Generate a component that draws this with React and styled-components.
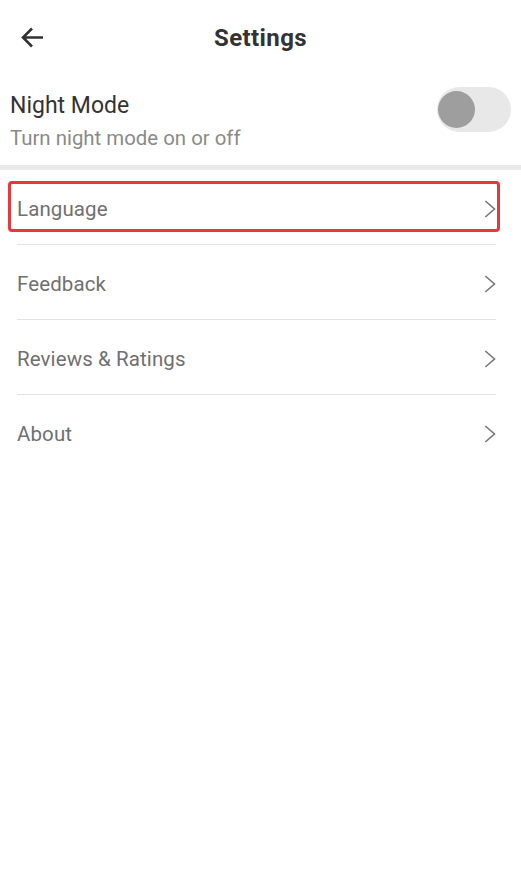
import React from "react";
import styled, { createGlobalStyle } from "styled-components";

const Global = createGlobalStyle`
  html, body { margin: 0; padding: 0; background: #fff; }
  body { font-family: Roboto, "Noto Sans", Arial, sans-serif; -webkit-font-smoothing: antialiased; }
  * { box-sizing: border-box; }
`;

const Page = styled.div`
  width: 521px;
  min-height: 896px;
  background: #fff;
`;

const Header = styled.header`
  height: 73px;
  display: grid;
  grid-template-columns: 1fr auto 1fr;
  align-items: center;
  padding: 0 20px;
`;

const BackButton = styled.button`
  justify-self: start;
  width: 24px;
  height: 24px;
  padding: 0;
  border: 0;
  background: none;
  display: flex;
  color: #333;
`;

const Title = styled.h1`
  margin: 0;
  padding-top: 4px;
  font-size: 24px;
  letter-spacing: 0.4px;
  font-weight: 700;
  color: #333;
  line-height: 69px;
`;

const NightSection = styled.section`
  height: 92px;
  padding: 14px 10px 0;
  display: flex;
  justify-content: space-between;
  align-items: flex-start;
`;

const NightText = styled.div`
  padding-top: 4px;
  display: flex;
  flex-direction: column;
`;

const NightTitle = styled.div`
  font-size: 23px;
  line-height: 30px;
  color: #333;
`;

const NightSub = styled.div`
  margin-top: 2px;
  font-size: 20.4px;
  line-height: 30px;
  color: #8a8a8a;
`;

const Track = styled.div`
  width: 74px;
  height: 45px;
  border-radius: 23px;
  background: #e8e8e8;
  display: flex;
  align-items: center;
  padding-left: 1px;
`;

const Knob = styled.div`
  width: 37px;
  height: 37px;
  border-radius: 50%;
  background: #9e9e9e;
`;

const Band = styled.div`
  height: 5px;
  background: #e9e9e9;
`;

const List = styled.ul`
  list-style: none;
  margin: 0 25px 0 17px;
  padding: 0;
`;

const Row = styled.li`
  position: relative;
  height: 75px;
  padding-top: 3px;
  display: flex;
  align-items: center;
  justify-content: space-between;
  border-bottom: ${(p) => (p.$last ? "none" : "1px solid #e3e3e3")};
`;

const RowLabel = styled.span`
  font-size: 20.5px;
  letter-spacing: 0.1px;
  color: #707070;
`;

const Highlight = styled.div`
  position: absolute;
  left: -9px;
  right: -4px;
  top: 11px;
  bottom: 12px;
  border: 3px solid #e8383d;
  border-radius: 4px;
  pointer-events: none;
`;

const Chevron = () => (
  <svg width="12" height="18" viewBox="0 0 12 18" fill="none">
    <polyline points="1.3,1 10.5,9 1.3,17" stroke="#777" strokeWidth="1.6" />
  </svg>
);

const items = ["Language", "Feedback", "Reviews & Ratings", "About"];

export default function App() {
  return (
    <Page>
      <Global />
      <Header>
        <BackButton aria-label="Back">
          <svg width="24" height="24" viewBox="0 0 24 24" fill="none">
            <path d="M23 12.5H3.5M12 3.5L3 12.5l9 9" stroke="#333" strokeWidth="2.6" />
          </svg>
        </BackButton>
        <Title>Settings</Title>
        <span />
      </Header>
      <NightSection>
        <NightText>
          <NightTitle>Night Mode</NightTitle>
          <NightSub>Turn night mode on or off</NightSub>
        </NightText>
        <Track>
          <Knob />
        </Track>
      </NightSection>
      <Band />
      <List>
        {items.map((label, i) => (
          <Row key={label} $last={i === items.length - 1}>
            {i === 0 && <Highlight />}
            <RowLabel>{label}</RowLabel>
            <Chevron />
          </Row>
        ))}
      </List>
    </Page>
  );
}
